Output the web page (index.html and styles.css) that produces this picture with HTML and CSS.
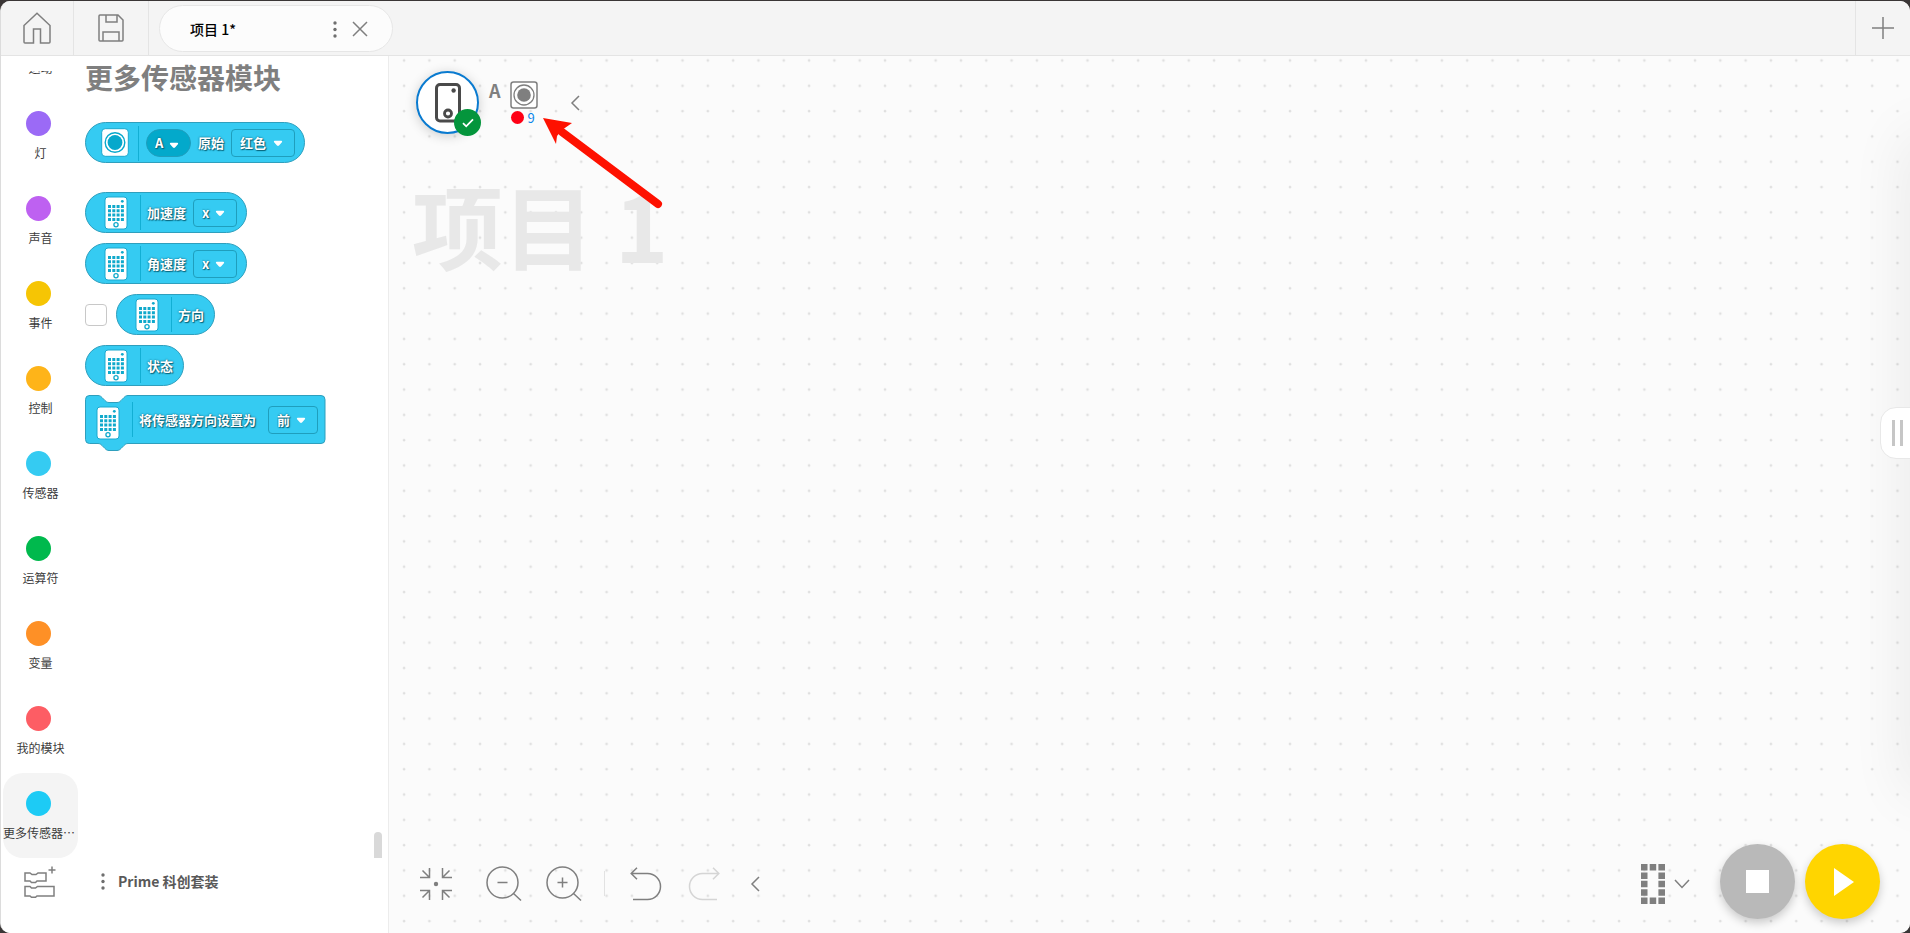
FILE: index.html
```html
<!DOCTYPE html>
<html lang="zh-CN">
<head>
<meta charset="utf-8">
<title>项目 1*</title>
<link rel="stylesheet" href="styles.css">
</head>
<body>
<svg class="defs" aria-hidden="true">
  <symbol id="device" viewBox="0 0 24 34">
    <rect x="1" y="1" width="22" height="32" rx="3" fill="#fff" stroke="#1aa9cf"/>
    <path d="M4 9h3v3h-3zM8.300 9h3v3h-3zM12.600 9h3v3h-3zM16.900 9h3v3h-3zM4 13.300h3v3h-3zM8.300 13.300h3v3h-3zM12.600 13.300h3v3h-3zM16.900 13.300h3v3h-3zM4 17.600h3v3h-3zM8.300 17.600h3v3h-3zM12.600 17.600h3v3h-3zM16.900 17.600h3v3h-3zM4 21.900h3v3h-3zM8.300 21.900h3v3h-3zM12.600 21.900h3v3h-3zM16.900 21.900h3v3h-3z" fill="#10a9cb"/>
    <circle cx="18.300" cy="5.300" r="1.400" fill="#10a9cb"/>
    <circle cx="12" cy="28.700" r="2.100" fill="#fff" stroke="#10a9cb" stroke-width="1.300"/>
  </symbol>
  <symbol id="caret" viewBox="0 0 10 7"><path d="M1.600.8h6.800q1.300.3.500 1.500L6 5.600q-1 .8-2 0L1.100 2.300q-.8-1.200.5-1.500z" fill="#fff"/></symbol>
</svg>
<div class="window">
  <header class="topbar">
    <button class="top-btn" aria-label="主页"><svg width="28" height="32" viewBox="0 0 28 32"><path d="M1 13.500 14 1.200l13 12.300V30q0 1-1 1h-8.500V17h-7v14H2q-1 0-1-1z"/></svg></button>
    <button class="top-btn save" aria-label="保存"><svg width="26" height="28" viewBox="0 0 26 28"><path d="M2 1h18l5 5v20q0 1-1 1H2q-1 0-1-1V2q0-1 1-1zM8 1v7h11V1M5 27V18h16v9"/></svg></button>
    <div class="tab">
      <span class="tab-title">项目 1*</span>
      <button class="plain" aria-label="更多"><svg class="dots" width="4" height="17" viewBox="0 0 4 17"><circle cx="2" cy="2" r="1.700"/><circle cx="2" cy="8.500" r="1.700"/><circle cx="2" cy="15" r="1.700"/></svg></button>
      <button class="plain" aria-label="关闭"><svg width="16" height="16" viewBox="0 0 16 16"><path d="M1 1l14 14M15 1L1 15"/></svg></button>
    </div>
    <button class="top-btn add" aria-label="新建"><svg width="22" height="22" viewBox="0 0 22 22"><path d="M11 0v22M0 11h22"/></svg></button>
  </header>

  <div class="main">
    <aside class="side">
      <nav class="cats">
        <button class="cat"><i class="dot blue"></i><span>运动</span></button>
        <button class="cat"><i class="dot violet"></i><span>灯</span></button>
        <button class="cat"><i class="dot purple"></i><span>声音</span></button>
        <button class="cat"><i class="dot yellow"></i><span>事件</span></button>
        <button class="cat"><i class="dot amber"></i><span>控制</span></button>
        <button class="cat"><i class="dot sky"></i><span>传感器</span></button>
        <button class="cat"><i class="dot green"></i><span>运算符</span></button>
        <button class="cat"><i class="dot orange"></i><span>变量</span></button>
        <button class="cat"><i class="dot coral"></i><span>我的模块</span></button>
        <button class="cat active"><i class="dot cyan"></i><span>更多传感器…</span></button>
      </nav>
      <section class="palette">
        <h1>更多传感器模块</h1>
        <div class="block lead">
          <svg class="ic color-ic" width="28" height="29" viewBox="0 0 28 29"><rect x=".7" y=".7" width="26.600" height="27.600" rx="3.500" fill="#fff" stroke="#1aa9cf"/><circle cx="14" cy="14.500" r="9.800" fill="#fff" stroke="#06a8cc" stroke-width="1.400"/><circle cx="14" cy="14.500" r="7.400" fill="#06a8cc"/></svg>
          <span class="pick pill"><select aria-label="端口"><option>A</option></select><svg class="caret"><use href="#caret"/></svg></span>
          <span class="label">原始</span>
          <span class="pick wide"><select aria-label="颜色"><option>红色</option></select><svg class="caret"><use href="#caret"/></svg></span>
        </div>
        <div class="block"><svg class="ic"><use href="#device"/></svg><span class="label">加速度</span><span class="pick"><select aria-label="加速度轴"><option>x</option></select><svg class="caret"><use href="#caret"/></svg></span></div>
        <div class="block"><svg class="ic"><use href="#device"/></svg><span class="label">角速度</span><span class="pick"><select aria-label="角速度轴"><option>x</option></select><svg class="caret"><use href="#caret"/></svg></span></div>
        <div class="check-row"><input type="checkbox" id="show-dir" aria-label="显示方向"><label class="block short" for="show-dir"><svg class="ic"><use href="#device"/></svg><span class="label">方向</span></label></div>
        <div class="block short"><svg class="ic"><use href="#device"/></svg><span class="label">状态</span></div>
        <div class="command">
          <svg class="shape" width="241" height="56" viewBox="0 0 241 56"><path d="M4 .5h9c2 0 3 1 4 2l3 3c1 1 2 2 4 2h8c2 0 3-1 4-2l3-3c1-1 2-2 4-2h193q4 0 4 4v40q0 4-4 4H43c-2 0-3 1-4 2l-3 3c-1 1-2 2-4 2h-8c-2 0-3-1-4-2l-3-3c-1-1-2-2-4-2H4.500q-4 0-4-4v-40q0-4 4-4z" fill="#35cbf2" stroke="#2f9fbd"/></svg>
          <svg class="ic"><use href="#device"/></svg><span class="label">将传感器方向设置为</span><span class="pick mid"><select aria-label="传感器方向"><option>前</option></select><svg class="caret"><use href="#caret"/></svg></span>
        </div>
        <i class="scroll-thumb"></i>
      </section>
      <button class="extension plain" aria-label="添加扩展"><svg width="32" height="32" viewBox="0 0 32 32"><path d="M1 7h5l2 1.500h4L14 7h8v8h-9l-1.500 1.500h-4L6 15H1zM1 20.500h5L7.500 22h4l2-1.500H30V30H13l-1.500 1.300h-4L6 30H1z"/><path d="M28 .5v7M24.500 4h7"/></svg></button>
      <div class="kit"><svg class="dots" width="4" height="17" viewBox="0 0 4 17"><circle cx="2" cy="2" r="1.700"/><circle cx="2" cy="8.500" r="1.700"/><circle cx="2" cy="15" r="1.700"/></svg><span>Prime 科创套装</span></div>
    </aside>

    <main class="canvas">
      <svg class="grid-dots" aria-hidden="true"><defs><pattern id="g" x="2.400" y="-8.300" width="25.312" height="25.312" patternUnits="userSpaceOnUse"><path d="M11.400 12.700h2.600M12.700 11.400v2.600" stroke="#dcdcdc" stroke-width="1.200"/></pattern></defs><rect width="100%" height="100%" fill="url(#g)"/></svg>
      <div class="status">
        <button class="hub" aria-label="集线器">
          <svg width="26" height="40" viewBox="0 0 26 40" fill="none"><rect x="1.500" y="1.500" width="23" height="36.500" rx="3.500" stroke="#4a4a4a" stroke-width="3"/><circle cx="18.600" cy="7.500" r="2.200" fill="#4a4a4a"/><circle cx="13" cy="30.500" r="3.500" stroke="#4a4a4a" stroke-width="2.800"/></svg>
          <span class="badge"><svg width="12" height="10" viewBox="0 0 12 10"><path d="M1 5.200 4.200 8.300 11 1.300" fill="none" stroke="#fff" stroke-width="1.800"/></svg></span>
        </button>
        <span class="port">A</span>
        <div class="sensor">
          <svg width="28" height="28" viewBox="0 0 28 28" fill="none" stroke="#7f7f7f"><rect x="1" y="1" width="26" height="26" rx="2.500" stroke-width="1.500" fill="#fff"/><circle cx="14" cy="14" r="10" stroke-width="1.300"/><circle cx="14" cy="14" r="6.800" fill="#7f7f7f" stroke="none"/></svg>
          <div class="reading"><i></i><span>9</span></div>
        </div>
        <button class="plain fold" aria-label="收起"><svg width="10" height="16" viewBox="0 0 10 16"><path d="M9 1 2 8l7 7"/></svg></button>
      </div>
      <div class="watermark">项目 1</div>
      <svg class="pointer" width="122" height="92" viewBox="0 0 122 92" aria-hidden="true"><path d="M116 87 20 15" stroke="#fe1100" stroke-width="8" stroke-linecap="round"/><path d="M1 1 30 6 20 13 15 19 14 27z" fill="#fe1100"/></svg>
      <i class="edge"></i>
      <button class="handle" aria-label="展开面板"><i></i><i></i></button>
      <div class="tools">
        <button class="plain" aria-label="居中"><svg width="32" height="32" viewBox="0 0 32 32"><path d="M9.500 0v9.500H0M9.500 9.500 2.500 2.500M22.500 0v9.500H32M22.500 9.500l7-7M0 22.500h9.500V32M9.500 22.500l-7 7M32 22.500h-9.500V32M22.500 22.500l7 7"/><circle cx="16" cy="16" r="2.200" fill="#7f7f7f" stroke="none"/></svg></button>
        <button class="plain zoom-out" aria-label="缩小"><svg width="36" height="36" viewBox="0 0 36 36"><circle cx="16.500" cy="16.500" r="15.500"/><path d="M11.500 16.500h10M27.500 27.500l7.500 7"/></svg></button>
        <button class="plain zoom-in" aria-label="放大"><svg width="36" height="36" viewBox="0 0 36 36"><circle cx="16.500" cy="16.500" r="15.500"/><path d="M11.500 16.500h10M16.500 11.500v10M27.500 27.500l7.500 7"/></svg></button>
        <i class="sep"></i>
        <button class="plain" aria-label="撤销"><svg width="32" height="34" viewBox="0 0 32 34"><path d="M7 .8 1.200 6.500 7 12.200M1.500 6.500H17.500a13 13 0 0 1 0 26H3"/></svg></button>
        <button class="plain redo" aria-label="重做" disabled><svg width="32" height="34" viewBox="0 0 32 34"><path d="m25 .8 5.800 5.700L25 12.200M30.500 6.500H14.500a13 13 0 0 0 0 26H29"/></svg></button>
        <button class="plain more" aria-label="收起工具"><svg width="10" height="16" viewBox="0 0 10 16"><path d="M9 1 2 8l7 7"/></svg></button>
        <button class="plain slot" aria-label="选择插槽"><svg width="24" height="40" viewBox="0 0 24 40"><path d="M0 0h6.500v6.500H0zM8.700 0h6.500v6.500H8.700zM17.400 0H24v6.500h-6.600zM0 8.400h6.500v6.500H0zM17.400 8.400H24v6.500h-6.600zM0 16.800h6.500v6.500H0zM17.400 16.800H24v6.500h-6.600zM0 25.200h6.500v6.500H0zM17.400 25.200H24v6.500h-6.600zM0 33.500h6.500V40H0zM8.700 33.500h6.500V40H8.700zM17.400 33.500H24V40h-6.600z" fill="#7f7f7f" stroke="none"/></svg><svg width="16" height="10" viewBox="0 0 16 10"><path d="m1 1 7 7.500L15 1"/></svg></button>
        <button class="round stop" aria-label="停止"><svg width="23" height="23" viewBox="0 0 23 23"><path d="M0 0h23v23H0z" fill="#fff"/></svg></button>
        <button class="round play" aria-label="运行"><svg width="20" height="28" viewBox="0 0 20 28"><path d="M0 0l20 14L0 28z" fill="#fff"/></svg></button>
      </div>
    </main>
  </div>
</div>
</body>
</html>
```
FILE: styles.css
```css
* { box-sizing: border-box; }
body {
  margin: 0;
  padding-top: 1px;
  height: 100vh;
  background: #3a3636;
  font-family: "Noto Sans CJK SC", "Noto Sans", sans-serif;
  overflow: hidden;
}
button, select, input { font: inherit; color: inherit; margin: 0; padding: 0; }
button { border: 0; background: none; display: flex; align-items: center; justify-content: center; }
svg { display: block; flex: none; }
.defs { position: absolute; width: 0; height: 0; }
.window {
  height: 100%;
  display: flex;
  flex-direction: column;
  border-left: 1px solid #dcdcdc;
  border-radius: 10px;
  overflow: hidden;
  background: #fff;
}
.topbar {
  display: flex;
  align-items: center;
  height: 55px;
  flex: none;
  background: #f4f4f4;
  border-bottom: 1px solid #e4e4e4;
}
.top-btn { width: 73px; height: 54px; border-right: 1px solid #e4e4e4; }
.top-btn.save { width: 75px; }
.top-btn.add { width: 55px; margin-left: auto; border-right: 0; border-left: 1px solid #e4e4e4; }
.top-btn svg, .plain svg { fill: none; stroke: #7f7f7f; stroke-width: 1.5; }
.tab {
  display: flex;
  align-items: center;
  gap: 15px;
  width: 234px;
  height: 47px;
  margin-left: 10px;
  padding: 2px 24px 0 30px;
  border: 1px solid #e6e6e6;
  border-radius: 24px;
  background: #fcfcfc;
}
.tab-title { flex: 1; font-size: 14px; font-weight: 500; color: #000; }
svg.dots, .plain svg.dots { fill: #6f6f6f; stroke: none; }

.main { flex: 1; min-height: 0; display: flex; }
.side {
  width: 388px;
  flex: none;
  display: grid;
  grid-template-columns: 77px 1fr;
  grid-template-rows: 1fr 75px;
  border-right: 1px solid #ececec;
  background: #fff;
}
.cats {
  display: flex;
  flex-direction: column;
  justify-content: flex-end;
  min-height: 0;
  margin-top: 15px;
  padding-left: 2px;
  overflow: hidden;
}
.cat {
  flex: none;
  flex-direction: column;
  justify-content: flex-start;
  width: 75px;
  height: 85px;
  padding-top: 18px;
  border-radius: 20px;
  font-size: 12px;
  line-height: 18px;
  color: #3c3c3c;
  white-space: nowrap;
}
.cat span { margin-top: 8px; }
.active { background: #f4f4f4; }
.active span { margin-right: 3px; }
.dot { width: 25px; height: 25px; margin-right: 4px; border-radius: 50%; }
.blue { background: #0090f5; }
.violet { background: #9b6af6; }
.purple { background: #be61f1; }
.yellow { background: #f6c504; }
.amber { background: #feb419; }
.sky { background: #35cbf2; }
.green { background: #00b94d; }
.orange { background: #fe9026; }
.coral { background: #fd5d64; }
.cyan { background: #1dcbf5; }

.palette {
  position: relative;
  display: flex;
  flex-direction: column;
  align-items: flex-start;
  gap: 10px;
  padding: 0 0 0 7px;
  overflow: hidden;
}
h1 { margin: 0 0 14px 0; font-size: 28px; line-height: 42px; font-weight: 700; color: #7f7f7f; }
.block {
  display: flex;
  align-items: center;
  height: 41px;
  padding: 0 9px 0 18px;
  border: 1px solid #2f9fbd;
  border-radius: 21px;
  background: #35cbf2;
}
.block.lead { padding-left: 15px; margin-bottom: 19px; }
.block.short { padding-right: 10px; }
.ic { width: 24px; height: 34px; }
.ic.color-ic { width: 28px; height: 29px; margin-right: 10px; }
.block .ic + .label, .command .ic + .label { margin-left: 12px; }
.block .ic + .label::before, .command .ic + .label::before, .block .ic + .pill::before {
  content: "";
  width: 1px;
  height: 35px;
  margin-right: 6px;
  background: #12afd4;
}
.label {
  display: flex;
  align-items: center;
  font-size: 13px;
  font-weight: 700;
  line-height: 20px;
  color: #fff;
  text-shadow: 0 0 2px #065265, 1px 1px 1px #07687f;
}
.pick {
  position: relative;
  display: flex;
  align-items: center;
  width: 44px;
  height: 28px;
  margin-left: 7px;
  border: 1px solid #1f9ebd;
  border-radius: 4px;
  color: #fff;
}
.pick select {
  width: 100%;
  height: 100%;
  padding-left: 8px;
  border: 0;
  outline: 0;
  background: none;
  appearance: none;
  font-size: 13px;
  font-weight: 700;
  text-shadow: 0 0 2px #065265, 1px 1px 1px #07687f;
}
.caret { position: absolute; right: 11px; top: 10px; width: 10px; height: 7px; pointer-events: none; }
.pick.wide { width: 64px; }
.pick.mid { width: 50px; }
.pick.pill { width: 45px; margin: 0 7px; border-radius: 14px; background: #03a9cb; }
.block .ic + .pill::before { position: absolute; left: -9px; top: -4px; }
.pill .caret { top: 12px; }
.check-row { display: flex; align-items: center; gap: 9px; }
.check-row input {
  width: 22px;
  height: 22px;
  appearance: none;
  border: 1px solid #c8c8c8;
  border-radius: 4px;
  background: #fff;
}
.command { position: relative; display: flex; align-items: center; width: 241px; height: 49px; margin-top: -1px; padding: 0 8px 0 11px; }
.command .shape { position: absolute; left: 0; top: 0; }
.command .ic, .command .label, .command .pick { position: relative; }
.command .ic { margin-top: 6px; }
.command .pick { margin-left: auto; }
.scroll-thumb { position: absolute; right: 6px; bottom: 0; width: 8px; height: 26px; border-radius: 4px 4px 0 0; background: #d9d9d9; }
.extension { align-self: start; margin-top: 8px; }
.kit { display: flex; align-items: center; align-self: start; gap: 13px; height: 46px; padding-left: 23px; font-size: 14px; font-weight: 700; color: #595959; }

.canvas { position: relative; flex: 1; min-width: 0; display: flex; flex-direction: column; background: #fbfbfb; overflow: hidden; }
.grid-dots { position: absolute; left: 0; top: 0; width: 100%; height: 100%; }
.status, .watermark, .tools { position: relative; }
.status { display: flex; align-items: flex-start; padding: 15px 0 0 27px; }
.hub {
  position: relative;
  width: 63px;
  height: 63px;
  border: 2px solid #0a7bd0;
  border-radius: 50%;
  background: #fff;
  box-shadow: 0 2px 12px #00000030;
}
.badge {
  position: absolute;
  right: -4px;
  bottom: -4px;
  width: 27px;
  height: 27px;
  display: flex;
  align-items: center;
  justify-content: center;
  border-radius: 50%;
  background: #04953c;
}
.port { margin: 7px 10px 0 10px; font-size: 18px; line-height: 24px; font-weight: 700; color: #7f7f7f; }
.sensor { margin-top: 10px; margin-left: -1px; }
.reading { display: flex; align-items: center; gap: 4px; height: 17px; padding-left: 1px; font-size: 13px; color: #0b86ea; }
.reading i { width: 13px; height: 13px; border-radius: 50%; background: #fe0015; }
.fold { margin: 24px 0 0 32px; }
.watermark { margin: 43px 0 0 23px; font-size: 91px; line-height: 92px; font-weight: 700; color: #e8e8e8; }
.pointer { position: absolute; left: 153px; top: 61px; fill: none; }
.edge { position: absolute; left: 100%; top: 80px; bottom: 140px; width: 40px; box-shadow: 0 0 60px #00000018; }
.handle {
  position: absolute;
  right: -4px;
  top: 351px;
  width: 34px;
  height: 52px;
  gap: 5px;
  border: 1px solid #e8e8e8;
  border-radius: 16px 0 0 16px;
  background: #fff;
}
.handle i { width: 3px; height: 26px; background: #c6c6c6; }
.tools { display: flex; align-items: center; height: 75px; margin-top: auto; margin-bottom: 14px; padding: 0 30px 0 31px; }
.tools .plain { padding-top: 4px; }
.zoom-out { margin-left: 34px; }
.zoom-in { margin-left: 24px; }
.sep { width: 1px; height: 25px; margin: 4px 25px 0 22px; background: #e2e2e2; }
.redo { margin-left: 26px; opacity: .3; }
.more { margin-left: 30px; }
.slot { gap: 9px; margin-left: auto; }
.round { width: 75px; height: 75px; border-radius: 50%; box-shadow: 0 4px 10px #00000033; }
.stop { margin-left: 30px; background: #b9b9b9; }
.play { margin-left: 10px; background: #ffd500; }
.play svg { margin-left: 2px; }
```
